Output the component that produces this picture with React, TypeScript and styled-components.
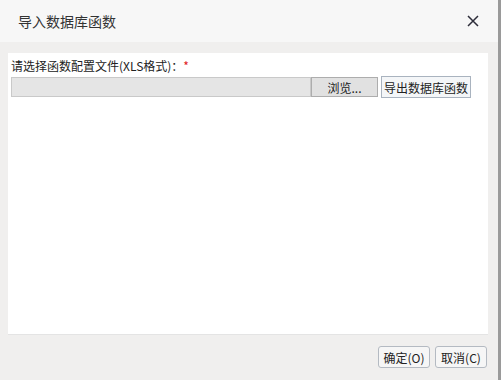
import React from "react";
import styled, { createGlobalStyle } from "styled-components";

const Global = createGlobalStyle`
  html, body { margin: 0; padding: 0; background: #f0efee; }
  body { font-family: "Microsoft YaHei", "Noto Sans CJK SC", "Liberation Sans", sans-serif; }
`;

const Frame = styled.div`
  display: flex;
  width: 501px;
  height: 380px;
`;

const Dialog = styled.div`
  flex: 1;
  display: flex;
  flex-direction: column;
  background: #f0efee;
`;

const Edge = styled.div`
  width: 3px;
  background: #9a9a9a;
`;

const Header = styled.div`
  height: 42px;
  background: #f7f7f7;
  display: flex;
  align-items: center;
  justify-content: space-between;
  padding: 0 18px 0 18px;
  box-sizing: border-box;
`;

const Title = styled.div`
  font-size: 14px;
  color: #333;
  letter-spacing: 0;
`;

const Close = styled.svg`
  width: 12px;
  height: 12px;
  margin-right: 1px;
`;

const Body = styled.div`
  flex: 1;
  padding: 11px 10px 0 8px;
  display: flex;
  flex-direction: column;
`;

const Panel = styled.div`
  height: 282px;
  background: #fff;
  border-bottom: 1px solid #e4e4e4;
  box-sizing: border-box;
  padding: 5px 3px;
  display: flex;
  flex-direction: column;
  gap: 2px;
`;

const Label = styled.div`
  font-size: 12px;
  color: #222;
  line-height: 16px;
`;

const Star = styled.span`
  color: #e02020;
`;

const Row = styled.div`
  display: flex;
  align-items: center;
`;

const PathInput = styled.div`
  width: 300px;
  height: 20px;
  background: #e5e5e5;
  border: 1px solid #c9c9c9;
  box-sizing: border-box;
`;

const Browse = styled.div`
  width: 67px;
  height: 20px;
  box-sizing: border-box;
  background: #e1e1e1;
  border: 1px solid #adadad;
  font-size: 12px;
  color: #222;
  display: flex;
  align-items: center;
  justify-content: center;
`;

const Export = styled.div`
  margin-left: 3px;
  height: 22px;
  padding: 0 2px;
  box-sizing: border-box;
  background: #f4f6f8;
  border: 1px solid #a9b3bf;
  font-size: 12px;
  color: #222;
  display: flex;
  align-items: center;
`;

const Footer = styled.div`
  display: flex;
  justify-content: flex-end;
  gap: 5px;
  padding: 11px 1px 0 0;
`;

const Btn = styled.div`
  width: 52px;
  height: 22px;
  box-sizing: border-box;
  border: 1px solid #b4bac2;
  border-radius: 3px;
  background: #f6f6f6;
  font-size: 12px;
  color: #222;
  display: flex;
  align-items: center;
  justify-content: center;
`;

export default function App() {
  return (
    <>
      <Global />
      <Frame>
        <Dialog>
          <Header>
            <Title>导入数据库函数</Title>
            <Close viewBox="0 0 12 12">
              <path d="M1 1 L11 11 M11 1 L1 11" stroke="#2d2d3a" strokeWidth="1.5" fill="none" />
            </Close>
          </Header>
          <Body>
            <Panel>
              <Label>
                请选择函数配置文件(XLS格式)：<Star>*</Star>
              </Label>
              <Row>
                <PathInput />
                <Browse>浏览...</Browse>
                <Export>导出数据库函数</Export>
              </Row>
            </Panel>
            <Footer>
              <Btn>确定(O)</Btn>
              <Btn>取消(C)</Btn>
            </Footer>
          </Body>
        </Dialog>
        <Edge />
      </Frame>
    </>
  );
}
